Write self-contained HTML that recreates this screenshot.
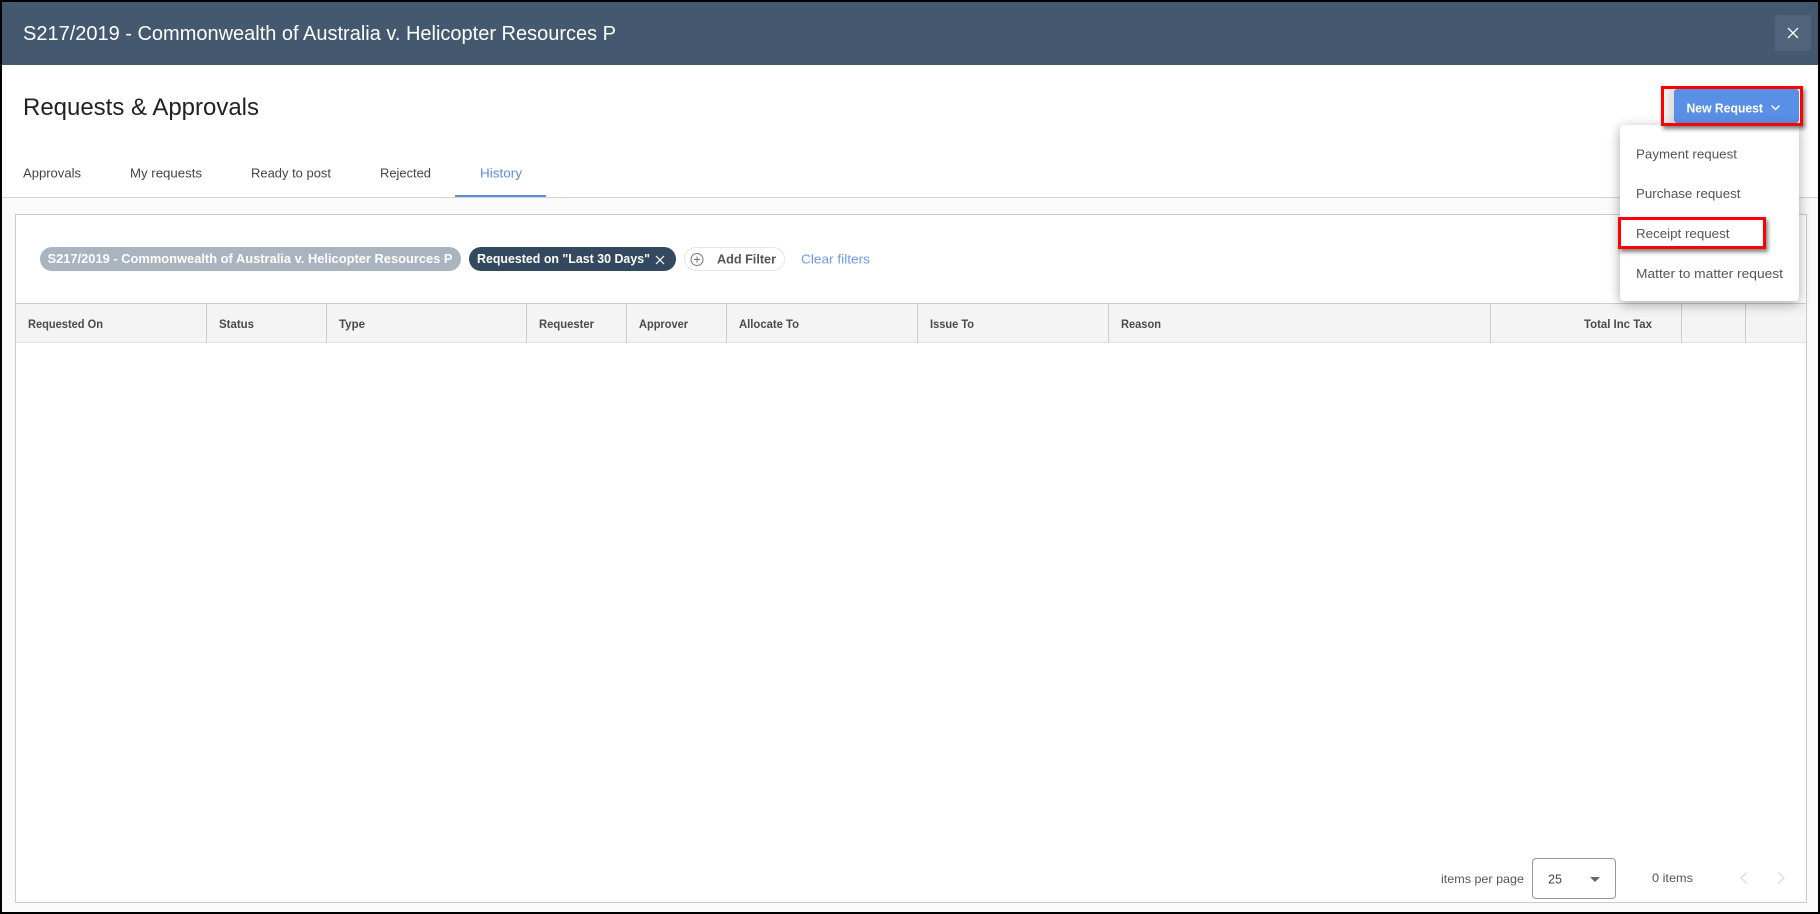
<!DOCTYPE html>
<html lang="en">
<head>
<meta charset="utf-8">
<title>Requests &amp; Approvals</title>
<style>
html,body{margin:0;padding:0;background:#000;}
body{position:relative;width:1820px;height:914px;overflow:hidden;font-family:"Liberation Sans",sans-serif;}
.b{position:absolute;box-sizing:border-box;}
svg{position:absolute;left:0;top:0;z-index:5;}
text{font-family:"Liberation Sans",sans-serif;}
.red{z-index:6;border:3px solid #f00;box-shadow:2px 3px 4px rgba(0,0,0,.5);}
</style>
</head>
<body>
<div class="b" style="left:2px;top:2px;width:1816px;height:910px;background:#fff;"></div>
<div class="b" style="left:2px;top:2px;width:1816px;height:63px;background:#44586f;"></div>
<div class="b" style="left:1775px;top:15px;width:36px;height:36px;background:#50637a;border-radius:3px;"></div>
<div class="b" style="left:2px;top:197px;width:1816px;height:715px;background:#fafafa;border-top:1px solid #d4d4d4;"></div>
<div class="b" style="left:455px;top:195px;width:91px;height:2px;background:#5b8de0;"></div>
<div class="b" style="left:15px;top:214px;width:1792px;height:689px;background:#fff;border:1px solid #ccc;"></div>
<div class="b" style="left:40px;top:247px;width:421px;height:24px;background:#aab4bf;border-radius:12px;"></div>
<div class="b" style="left:469px;top:247px;width:207px;height:24px;background:#34495f;border-radius:12px;"></div>
<div class="b" style="left:684px;top:247px;width:101px;height:24px;background:#fff;border:1px solid #e6e6e6;border-radius:12px;"></div>
<div class="b" style="left:16px;top:303px;width:1790px;height:40px;background:#f4f4f4;border-top:1px solid #ccc;border-bottom:1px solid #e2e2e2;"></div>
<div class="b" style="left:206px;top:303px;width:1px;height:40px;background:#ccc;"></div>
<div class="b" style="left:326px;top:303px;width:1px;height:40px;background:#ccc;"></div>
<div class="b" style="left:526px;top:303px;width:1px;height:40px;background:#ccc;"></div>
<div class="b" style="left:626px;top:303px;width:1px;height:40px;background:#ccc;"></div>
<div class="b" style="left:726px;top:303px;width:1px;height:40px;background:#ccc;"></div>
<div class="b" style="left:917px;top:303px;width:1px;height:40px;background:#ccc;"></div>
<div class="b" style="left:1108px;top:303px;width:1px;height:40px;background:#ccc;"></div>
<div class="b" style="left:1490px;top:303px;width:1px;height:40px;background:#ccc;"></div>
<div class="b" style="left:1681px;top:303px;width:1px;height:40px;background:#ccc;"></div>
<div class="b" style="left:1745px;top:303px;width:1px;height:40px;background:#ccc;"></div>
<div class="b" style="left:1664px;top:89px;width:10px;height:34px;background:linear-gradient(90deg,#f4f4f4,#dcdcdc);"></div>
<div class="b" style="left:1674px;top:89px;width:125px;height:34px;background:#5a8fe6;border-radius:3px;"></div>
<div class="b" style="left:1620px;top:125px;width:179px;height:176px;background:#fff;border-radius:4px;box-shadow:0 3px 12px rgba(0,0,0,.35);"></div>
<div class="b" style="left:1532px;top:858px;width:84px;height:41px;background:#fff;border:1px solid #999;border-radius:4px;"></div>

<svg width="1820" height="914" viewBox="0 0 1820 914" xmlns="http://www.w3.org/2000/svg">
<text x="23" y="40" font-size="20" fill="#fff" textLength="593" lengthAdjust="spacingAndGlyphs">S217/2019 - Commonwealth of Australia v. Helicopter Resources P</text>
<path d="M1788 28l10 10M1798 28l-10 10" stroke="#fff" stroke-width="1.3" fill="none"/>
<text x="23" y="115" font-size="24" fill="#222" textLength="236" lengthAdjust="spacingAndGlyphs">Requests &amp; Approvals</text>
<text x="23" y="177.5" font-size="13" fill="#444" textLength="58" lengthAdjust="spacingAndGlyphs">Approvals</text>
<text x="130" y="177.5" font-size="13" fill="#444" textLength="72" lengthAdjust="spacingAndGlyphs">My requests</text>
<text x="251" y="177.5" font-size="13" fill="#444" textLength="80" lengthAdjust="spacingAndGlyphs">Ready to post</text>
<text x="380" y="177.5" font-size="13" fill="#444" textLength="51" lengthAdjust="spacingAndGlyphs">Rejected</text>
<text x="480" y="177.5" font-size="13" fill="#5b8de0" textLength="42" lengthAdjust="spacingAndGlyphs">History</text>

<text x="47.5" y="263" font-size="13" font-weight="700" fill="#fff" textLength="405" lengthAdjust="spacingAndGlyphs">S217/2019 - Commonwealth of Australia v. Helicopter Resources P</text>
<text x="477" y="263" font-size="13" font-weight="700" fill="#fff" textLength="173" lengthAdjust="spacingAndGlyphs">Requested on "Last 30 Days"</text>
<path d="M656 256l8 8M664 256l-8 8" stroke="#fff" stroke-width="1.2" fill="none"/>
<circle cx="697" cy="259.5" r="6" fill="none" stroke="#777" stroke-width="1"/>
<path d="M694 259.5h6M697 256.5v6" stroke="#777" stroke-width="1" fill="none"/>
<text x="717" y="263.5" font-size="13" font-weight="700" fill="#555" textLength="59" lengthAdjust="spacingAndGlyphs">Add Filter</text>
<text x="801" y="263.5" font-size="13" fill="#6f9ae8" textLength="69" lengthAdjust="spacingAndGlyphs">Clear filters</text>

<g font-size="12" font-weight="700" fill="#4a4a4a">
<text x="28" y="328" textLength="75" lengthAdjust="spacingAndGlyphs">Requested On</text>
<text x="219" y="328" textLength="35" lengthAdjust="spacingAndGlyphs">Status</text>
<text x="339" y="328" textLength="26" lengthAdjust="spacingAndGlyphs">Type</text>
<text x="539" y="328" textLength="55" lengthAdjust="spacingAndGlyphs">Requester</text>
<text x="639" y="328" textLength="49" lengthAdjust="spacingAndGlyphs">Approver</text>
<text x="739" y="328" textLength="60" lengthAdjust="spacingAndGlyphs">Allocate To</text>
<text x="930" y="328" textLength="44" lengthAdjust="spacingAndGlyphs">Issue To</text>
<text x="1121" y="328" textLength="40" lengthAdjust="spacingAndGlyphs">Reason</text>
<text x="1584" y="328" textLength="68" lengthAdjust="spacingAndGlyphs">Total Inc Tax</text>
</g>

<text x="1686.5" y="112.5" font-size="13" font-weight="700" fill="#fff" textLength="76.5" lengthAdjust="spacingAndGlyphs">New Request</text>
<path d="M1771.5 105.5l4 4 4-4" stroke="#fff" stroke-width="1.4" fill="none"/>

<g font-size="13" fill="#555">
<text x="1636" y="158.5" textLength="101" lengthAdjust="spacingAndGlyphs">Payment request</text>
<text x="1636" y="198" textLength="104.5" lengthAdjust="spacingAndGlyphs">Purchase request</text>
<text x="1636" y="238" textLength="93.5" lengthAdjust="spacingAndGlyphs">Receipt request</text>
<text x="1636" y="278" textLength="147" lengthAdjust="spacingAndGlyphs">Matter to matter request</text>
</g>

<text x="1441" y="883" font-size="12" fill="#555" textLength="83" lengthAdjust="spacingAndGlyphs">items per page</text>
<text x="1548" y="883.5" font-size="13" fill="#444" textLength="14" lengthAdjust="spacingAndGlyphs">25</text>
<path d="M1590 877h10l-5 5z" fill="#666"/>
<text x="1652" y="882" font-size="12" fill="#555" textLength="41" lengthAdjust="spacingAndGlyphs">0 items</text>
<path d="M1747 872.5l-6 5.5 6 5.5M1778 872.5l6 5.5-6 5.5" stroke="#ddd" stroke-width="1.4" fill="none"/>
</svg>

<div class="b red" style="left:1661px;top:86px;width:142px;height:40px;"></div>
<div class="b red" style="left:1618px;top:217px;width:148px;height:32px;"></div>
</body>
</html>
